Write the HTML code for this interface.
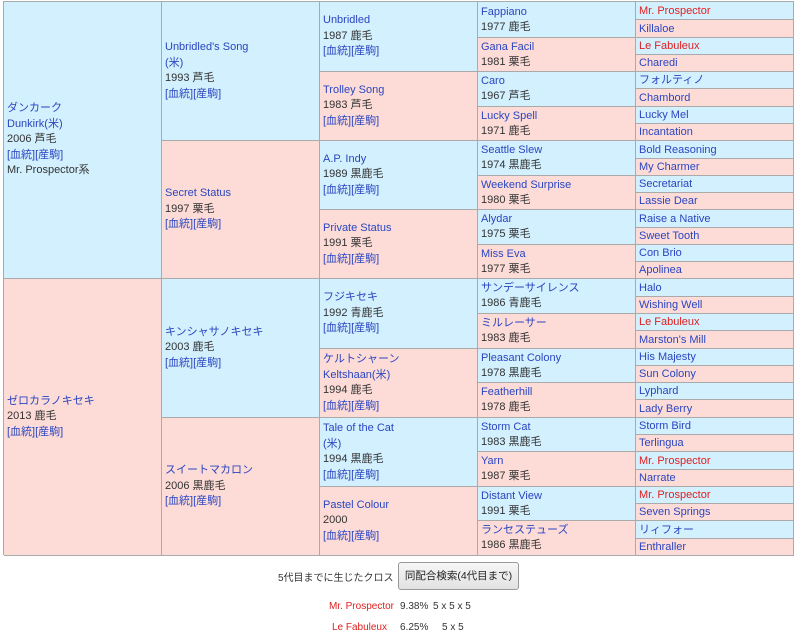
<!DOCTYPE html>
<html><head><meta charset="utf-8"><style>
body{margin:0;width:800px;height:636px;background:#fff;font-family:"Liberation Sans","Noto Sans CJK JP",sans-serif;font-size:11px;color:#333;position:relative;overflow:hidden}
#t{position:absolute;left:3px;top:1px;width:791px;height:554px;border-left:1px solid #aaa;border-top:1px solid #aaa;box-sizing:border-box}
.c{position:absolute;box-sizing:border-box;border-right:1px solid #aaa;border-bottom:1px solid #aaa;display:flex;flex-direction:column;justify-content:center;padding-left:3px;line-height:15.5px;white-space:nowrap;overflow:hidden}
.b{background:#d2f0fe}.p{background:#fddcd8}
a{color:#2a45c0;text-decoration:none}
.r{color:#e02020}
.c5{left:632px;width:158px;line-height:13px;padding-top:1px}
.c4{left:474px;width:158px;line-height:15px}
.c3{left:316px;width:158px}
.c2{left:158px;width:158px}
.c1{left:0;width:158px}
.btn{position:absolute;left:398px;top:562px;width:121px;height:28px;box-sizing:border-box;border:1px solid #999;border-radius:3px;background:linear-gradient(#f6f6f6,#e2e2e2);font-size:10.5px;line-height:26px;text-align:center;color:#222;white-space:nowrap}
.s{font-size:10px;position:absolute}
</style></head><body>
<div id="t">
<div class="c c1 b" style="top:0;height:277px"><a>ダンカーク</a><a>Dunkirk(米)</a><span>2006 芦毛</span><span><a>[血統][産駒]</a></span><span>Mr. Prospector系</span></div>
<div class="c c1 p" style="top:277px;height:277px"><a>ゼロカラノキセキ</a><span>2013 鹿毛</span><span><a>[血統][産駒]</a></span></div>
<div class="c c2 b" style="top:0;height:139px"><a>Unbridled's Song</a><a>(米)</a><span>1993 芦毛</span><span><a>[血統][産駒]</a></span></div>
<div class="c c2 p" style="top:139px;height:138px"><a>Secret Status</a><span>1997 栗毛</span><span><a>[血統][産駒]</a></span></div>
<div class="c c2 b" style="top:277px;height:139px"><a>キンシャサノキセキ</a><span>2003 鹿毛</span><span><a>[血統][産駒]</a></span></div>
<div class="c c2 p" style="top:416px;height:138px"><a>スイートマカロン</a><span>2006 黒鹿毛</span><span><a>[血統][産駒]</a></span></div>
<div class="c c3 b" style="top:0;height:70px"><a>Unbridled</a><span>1987 鹿毛</span><span><a>[血統][産駒]</a></span></div>
<div class="c c3 p" style="top:70px;height:69px"><a>Trolley Song</a><span>1983 芦毛</span><span><a>[血統][産駒]</a></span></div>
<div class="c c3 b" style="top:139px;height:69px"><a>A.P. Indy</a><span>1989 黒鹿毛</span><span><a>[血統][産駒]</a></span></div>
<div class="c c3 p" style="top:208px;height:69px"><a>Private Status</a><span>1991 栗毛</span><span><a>[血統][産駒]</a></span></div>
<div class="c c3 b" style="top:277px;height:70px"><a>フジキセキ</a><span>1992 青鹿毛</span><span><a>[血統][産駒]</a></span></div>
<div class="c c3 p" style="top:347px;height:69px"><a>ケルトシャーン</a><a>Keltshaan(米)</a><span>1994 鹿毛</span><span><a>[血統][産駒]</a></span></div>
<div class="c c3 b" style="top:416px;height:69px"><a>Tale of the Cat</a><a>(米)</a><span>1994 黒鹿毛</span><span><a>[血統][産駒]</a></span></div>
<div class="c c3 p" style="top:485px;height:69px"><a>Pastel Colour</a><span>2000</span><span><a>[血統][産駒]</a></span></div>
<div class="c c4 b" style="top:0;height:36px"><a>Fappiano</a><span>1977 鹿毛</span></div>
<div class="c c4 p" style="top:36px;height:34px"><a>Gana Facil</a><span>1981 栗毛</span></div>
<div class="c c4 b" style="top:70px;height:35px"><a>Caro</a><span>1967 芦毛</span></div>
<div class="c c4 p" style="top:105px;height:34px"><a>Lucky Spell</a><span>1971 鹿毛</span></div>
<div class="c c4 b" style="top:139px;height:35px"><a>Seattle Slew</a><span>1974 黒鹿毛</span></div>
<div class="c c4 p" style="top:174px;height:34px"><a>Weekend Surprise</a><span>1980 栗毛</span></div>
<div class="c c4 b" style="top:208px;height:35px"><a>Alydar</a><span>1975 栗毛</span></div>
<div class="c c4 p" style="top:243px;height:34px"><a>Miss Eva</a><span>1977 栗毛</span></div>
<div class="c c4 b" style="top:277px;height:35px"><a>サンデーサイレンス</a><span>1986 青鹿毛</span></div>
<div class="c c4 p" style="top:312px;height:35px"><a>ミルレーサー</a><span>1983 鹿毛</span></div>
<div class="c c4 b" style="top:347px;height:34px"><a>Pleasant Colony</a><span>1978 黒鹿毛</span></div>
<div class="c c4 p" style="top:381px;height:35px"><a>Featherhill</a><span>1978 鹿毛</span></div>
<div class="c c4 b" style="top:416px;height:34px"><a>Storm Cat</a><span>1983 黒鹿毛</span></div>
<div class="c c4 p" style="top:450px;height:35px"><a>Yarn</a><span>1987 栗毛</span></div>
<div class="c c4 b" style="top:485px;height:34px"><a>Distant View</a><span>1991 栗毛</span></div>
<div class="c c4 p" style="top:519px;height:35px"><a>ランセステューズ</a><span>1986 黒鹿毛</span></div>
<div class="c c5 b" style="top:0;height:18px"><a class="r">Mr. Prospector</a></div>
<div class="c c5 p" style="top:18px;height:18px"><a>Killaloe</a></div>
<div class="c c5 b" style="top:36px;height:17px"><a class="r">Le Fabuleux</a></div>
<div class="c c5 p" style="top:53px;height:17px"><a>Charedi</a></div>
<div class="c c5 b" style="top:70px;height:17px"><a>フォルティノ</a></div>
<div class="c c5 p" style="top:87px;height:18px"><a>Chambord</a></div>
<div class="c c5 b" style="top:105px;height:17px"><a>Lucky Mel</a></div>
<div class="c c5 p" style="top:122px;height:17px"><a>Incantation</a></div>
<div class="c c5 b" style="top:139px;height:18px"><a>Bold Reasoning</a></div>
<div class="c c5 p" style="top:157px;height:17px"><a>My Charmer</a></div>
<div class="c c5 b" style="top:174px;height:17px"><a>Secretariat</a></div>
<div class="c c5 p" style="top:191px;height:17px"><a>Lassie Dear</a></div>
<div class="c c5 b" style="top:208px;height:18px"><a>Raise a Native</a></div>
<div class="c c5 p" style="top:226px;height:17px"><a>Sweet Tooth</a></div>
<div class="c c5 b" style="top:243px;height:17px"><a>Con Brio</a></div>
<div class="c c5 p" style="top:260px;height:17px"><a>Apolinea</a></div>
<div class="c c5 b" style="top:277px;height:18px"><a>Halo</a></div>
<div class="c c5 p" style="top:295px;height:17px"><a>Wishing Well</a></div>
<div class="c c5 b" style="top:312px;height:17px"><a class="r">Le Fabuleux</a></div>
<div class="c c5 p" style="top:329px;height:18px"><a>Marston's Mill</a></div>
<div class="c c5 b" style="top:347px;height:17px"><a>His Majesty</a></div>
<div class="c c5 p" style="top:364px;height:17px"><a>Sun Colony</a></div>
<div class="c c5 b" style="top:381px;height:17px"><a>Lyphard</a></div>
<div class="c c5 p" style="top:398px;height:18px"><a>Lady Berry</a></div>
<div class="c c5 b" style="top:416px;height:17px"><a>Storm Bird</a></div>
<div class="c c5 p" style="top:433px;height:17px"><a>Terlingua</a></div>
<div class="c c5 b" style="top:450px;height:18px"><a class="r">Mr. Prospector</a></div>
<div class="c c5 p" style="top:468px;height:17px"><a>Narrate</a></div>
<div class="c c5 b" style="top:485px;height:17px"><a class="r">Mr. Prospector</a></div>
<div class="c c5 p" style="top:502px;height:17px"><a>Seven Springs</a></div>
<div class="c c5 b" style="top:519px;height:18px"><a>リィフォー</a></div>
<div class="c c5 p" style="top:537px;height:17px"><a>Enthraller</a></div>
</div>
<div class="s" style="left:278px;top:569px;color:#333;white-space:nowrap">5代目までに生じたクロス</div>
<div class="btn">同配合検索(4代目まで)</div>
<div class="s" style="right:406px;top:601px;color:#e02020">Mr. Prospector</div>
<div class="s" style="left:400px;top:601px">9.38%</div>
<div class="s" style="left:433px;top:601px">5 x 5 x 5</div>
<div class="s" style="right:413px;top:622px;color:#e02020">Le Fabuleux</div>
<div class="s" style="left:400px;top:622px">6.25%</div>
<div class="s" style="left:442px;top:622px">5 x 5</div>
</body></html>
